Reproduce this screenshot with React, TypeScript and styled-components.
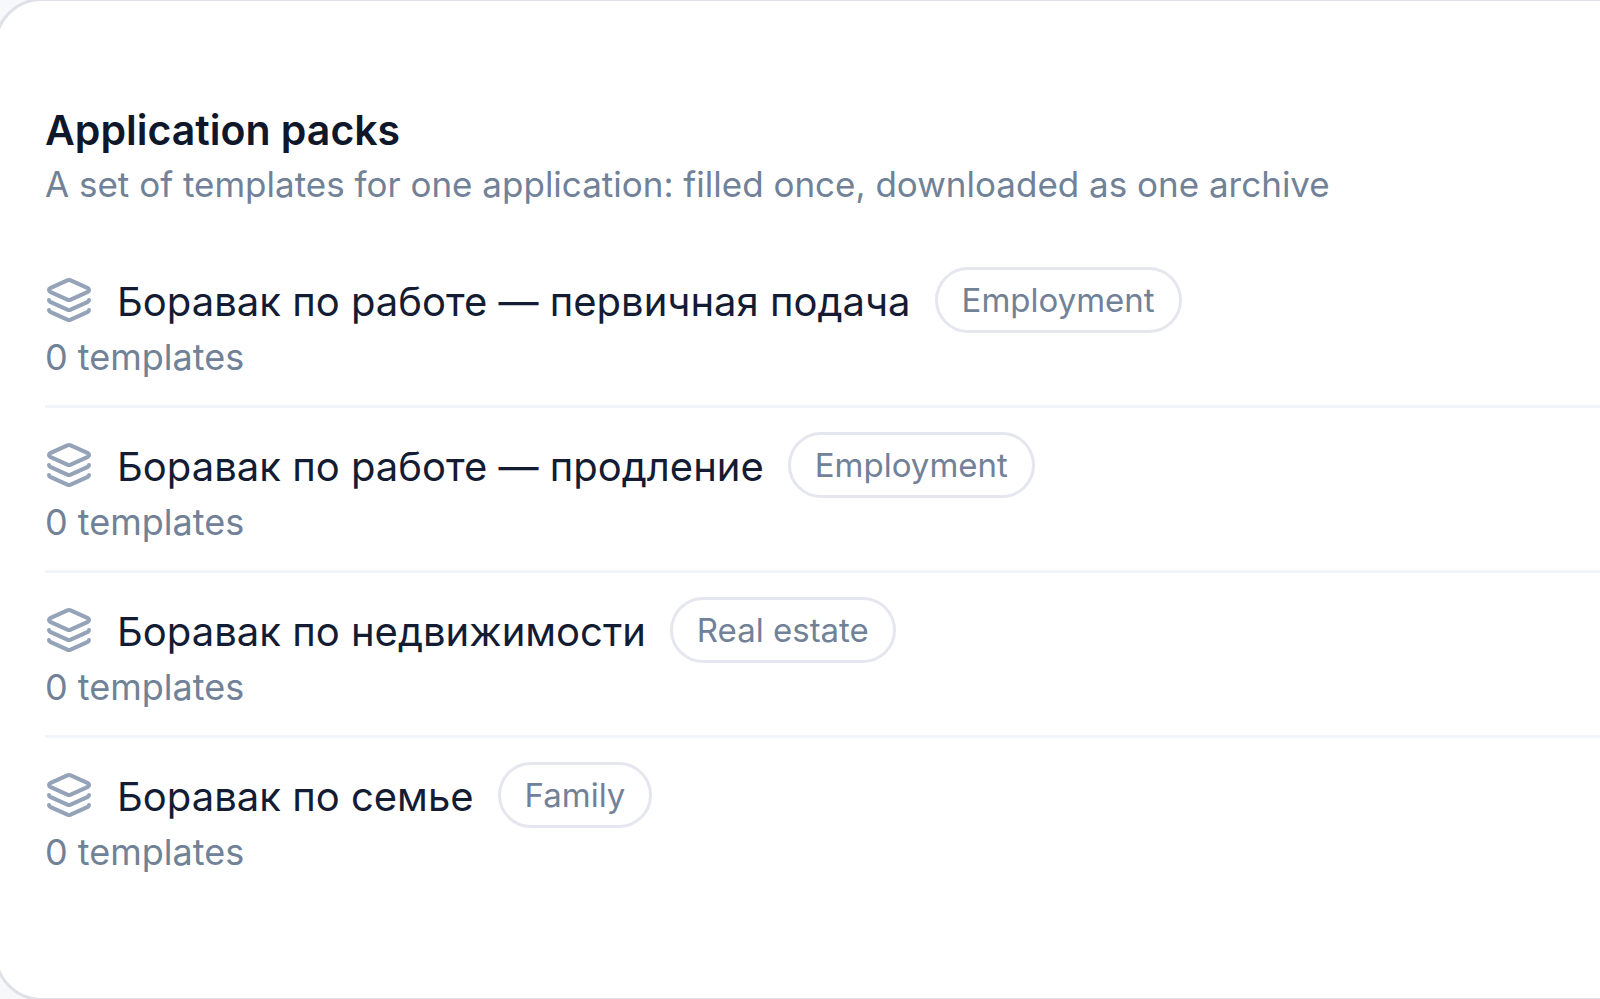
import React from "react";
import styled, { createGlobalStyle } from "styled-components";
import { Layers } from "lucide-react";

const GlobalStyle = createGlobalStyle`
  * { box-sizing: border-box; }
  body { margin: 0; background: #f6f8fa; font-family: Inter, "Noto Sans", sans-serif; }
  h2, p, ul { margin: 0; padding: 0; }
`;
const Page = styled.div`
  display: flex;
  flex-direction: column;
  min-height: 100vh;
  overflow: hidden;
`;
const Card = styled.main`
  flex: 1;
  margin: -2px -56px -2px -6px;
  padding: 102px 48px 96px;
  background: #fff;
  border: 3px solid #e0e1e8;
  border-radius: 48px;
`;
const Title = styled.h2`
  font-size: 41px;
  line-height: 54px;
  font-weight: 600;
  color: #0f172a;
`;
const Subtitle = styled.p`
  font-size: 35px;
  line-height: 54px;
  color: #718198;
`;
const List = styled.ul`
  margin-top: 32px;
  list-style: none;
`;
const Item = styled.li`
  padding: 24px 0;
  & + & { border-top: 3px solid #f1f5f9; }
`;
const Row = styled.div`
  display: flex;
  align-items: center;
  gap: 24px;
`;
const Name = styled.span`
  padding-top: 4px;
  font-size: 40px;
  line-height: 60px;
  color: #141c33;
`;
const Badge = styled.span`
  padding: 0 24px;
  border: 3px solid #e5e6ee;
  border-radius: 33px;
  font-size: 33px;
  line-height: 60px;
  color: #718198;
`;
const Count = styled.p`
  font-size: 36px;
  line-height: 48px;
  color: #718198;
`;
const packs = [
  { name: "Боравак по работе — первичная подача", kind: "Employment" },
  { name: "Боравак по работе — продление", kind: "Employment" },
  { name: "Боравак по недвижимости", kind: "Real estate" },
  { name: "Боравак по семье", kind: "Family" },
];
export default function App() {
  return (
    <Page>
      <GlobalStyle />
      <Card>
        <Title>Application packs</Title>
        <Subtitle>A set of templates for one application: filled once, downloaded as one archive</Subtitle>
        <List>
          {packs.map((p) => (
            <Item key={p.name}>
              <Row>
                <Layers size={48} color="#94a3b8" aria-hidden />
                <Name>{p.name}</Name>
                <Badge>{p.kind}</Badge>
              </Row>
              <Count>0 templates</Count>
            </Item>
          ))}
        </List>
      </Card>
    </Page>
  );
}
